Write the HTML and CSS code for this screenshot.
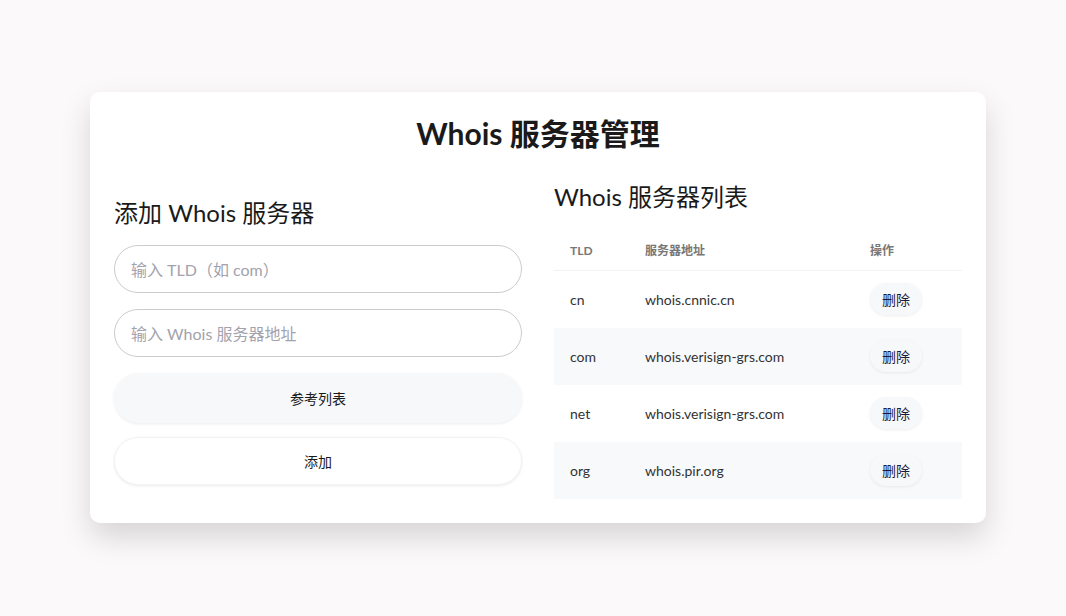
FILE: index.html
```html
<!DOCTYPE html>
<html lang="zh-CN">
<head>
    <meta charset="UTF-8">
    <meta name="viewport" content="width=device-width, initial-scale=1.0">
    <title>Whois 服务器管理</title>
    <link rel="stylesheet" href="styles.css">
</head>
<body>
    <div class="card">
        <h1>Whois 服务器管理</h1>
        <div class="columns">
            <!-- 添加 -->
            <div class="add-panel">
                <h2 class="add-title">添加 Whois 服务器</h2>
                <input type="text" class="field" placeholder="输入 TLD（如 com）">
                <input type="text" class="field" placeholder="输入 Whois 服务器地址">
                <button class="btn btn-ref">参考列表</button>
                <button class="btn btn-add">添加</button>
            </div>
            <!-- 列表 -->
            <div class="list-panel">
                <h2>Whois 服务器列表</h2>
                <table>
                    <thead>
                        <tr>
                            <th class="col-tld">TLD</th>
                            <th class="col-host">服务器地址</th>
                            <th class="col-op">操作</th>
                        </tr>
                    </thead>
                    <tbody>
                        <tr><td>cn</td><td>whois.cnnic.cn</td><td><button class="del">删除</button></td></tr>
                        <tr><td>com</td><td>whois.verisign-grs.com</td><td><button class="del">删除</button></td></tr>
                        <tr><td>net</td><td>whois.verisign-grs.com</td><td><button class="del">删除</button></td></tr>
                        <tr><td>org</td><td>whois.pir.org</td><td><button class="del">删除</button></td></tr>
                    </tbody>
                </table>
            </div>
        </div>
    </div>
</body>
</html>
```

FILE: styles.css
```css
*{
    box-sizing: border-box;
    margin: 0;
    padding: 0;
}

html, body{
    min-height: 100%;
}
body{
    background-color: #fcf9fa;
    color: #1a1a1a;
    font-family: Lato, "Noto Sans CJK SC", sans-serif;
    padding-bottom: 60px;
}

.card{
    width: 896px;
    margin: 92px 0 0 90px;
    padding: 24px 24px 24px;
    background-color: #fff;
    border-radius: 10px;
    box-shadow: 0 14px 30px rgba(0, 0, 0, 0.15);
}

h1{
    font-size: 30px;
    font-weight: 700;
    line-height: 35px;
    text-align: center;
    margin-bottom: 30px;
}

.columns{
    display: grid;
    grid-template-columns: 1fr 1fr;
    gap: 32px;
    align-items: start;
}

h2{
    font-size: 24px;
    font-weight: 400;
    line-height: 32px;
}

.add-panel{
    display: flex;
    flex-direction: column;
    gap: 16px;
}
.add-title{
    margin-top: 16px;
}

.field{
    height: 48px;
    border: 1px solid #ccc;
    border-radius: 24px;
    padding: 0 16px;
    font-family: inherit;
    font-size: 16px;
    color: #333;
    outline: none;
}
.field::placeholder{
    color: #a3a2ad;
}

.btn{
    border: none;
    border-radius: 25px;
    font-family: inherit;
    font-size: 14px;
    color: #1a1a1a;
    cursor: pointer;
    box-shadow: 0 1px 3px rgba(0, 0, 0, 0.08);
}
.btn-ref{
    height: 50px;
    background-color: #f7f8fa;
}
.btn-add{
    height: 48px;
    margin-top: -2px;
    background-color: #fff;
    border: 1px solid #f3f3f3;
}

.list-panel h2{
    margin-bottom: 19px;
}

table{
    width: 100%;
    border-collapse: collapse;
}
th{
    text-align: left;
    font-size: 12px;
    font-weight: 700;
    color: #777;
    line-height: 14px;
    padding: 12px 16px;
    border-bottom: 1px solid #f2f2f2;
}
.col-tld{ width: 75px; }
.col-host{ width: 225px; }

td{
    font-size: 14px;
    color: #333;
    height: 57px;
    padding: 0 16px;
}
tbody tr:nth-child(even){
    background-color: #f8f9fb;
}

.del{
    height: 32px;
    padding: 0 12px;
    border: none;
    border-radius: 16px;
    background-color: #f7f8fa;
    box-shadow: 0 1px 3px rgba(0, 0, 0, 0.07);
    font-family: inherit;
    font-size: 14px;
    color: #1a1a40;
    cursor: pointer;
}
```
